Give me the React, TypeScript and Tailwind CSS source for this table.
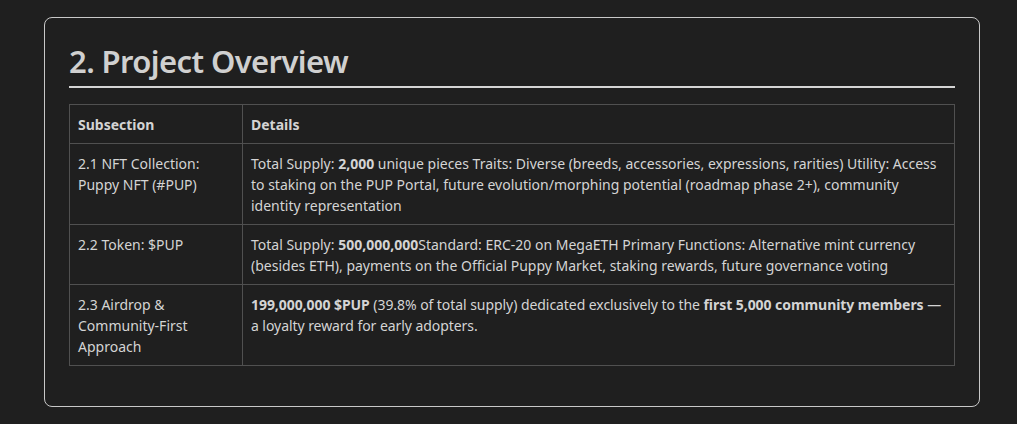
import React from "react";

type Row = { sub: string; details: React.ReactNode; tight?: boolean };

const rows: Row[] = [
  {
    sub: "2.1 NFT Collection: Puppy NFT (#PUP)",
    details: (
      <>
        Total Supply: <strong>2,000</strong> unique pieces Traits: Diverse (breeds, accessories,
        expressions, rarities) Utility: Access to staking on the PUP Portal, future
        evolution/morphing potential (roadmap phase 2+), community identity representation
      </>
    ),
  },
  {
    sub: "2.2 Token: $PUP",
    details: (
      <>
        Total Supply: <strong>500,000,000</strong>Standard: ERC-20 on MegaETH Primary Functions:
        Alternative mint currency (besides ETH), payments on the Official Puppy Market, staking
        rewards, future governance voting
      </>
    ),
  },
  {
    sub: "2.3 Airdrop & Community-First Approach",
    tight: true,
    details: (
      <>
        <strong>199,000,000 $PUP</strong> (39.8% of total supply) dedicated exclusively to the{" "}
        <strong>first 5,000 community members</strong> — a loyalty reward for early adopters.
      </>
    ),
  },
];

const App: React.FC = () => {
  return (
    <div className="min-h-[424px] bg-[#1f1f1f] pt-[17px] font-['Noto_Sans',sans-serif] text-[#d4d4d4]">
      <div className="ml-[44px] w-[936px] rounded-lg border border-[#c8c8c8] px-6 pt-6 pb-6">
        {/* HEADER */}
        <h2 className="border-b-2 border-[#d4d4d4] pb-[6px] text-[31px] font-semibold leading-[38px] tracking-[-0.6px] text-[#d0d0d0]">
          2. Project Overview
        </h2>

        {/* TABLE */}
        <table className="mt-4 mb-4 w-full border-collapse text-[14px] leading-[21px]">
          <thead>
            <tr>
              <th className="w-[173px] border border-[#505050] px-2 py-[8.5px] text-left font-bold">
                Subsection
              </th>
              <th className="border border-[#505050] px-2 py-[8.5px] text-left font-bold">
                Details
              </th>
            </tr>
          </thead>
          <tbody>
            {rows.map((r) => (
              <tr key={r.sub}>
                <td className="border border-[#505050] px-2 py-[8.5px] align-top">{r.sub}</td>
                <td
                  className={
                    r.tight
                      ? "border border-[#505050] px-2 py-[8.5px] align-top tracking-[-0.06px]"
                      : "border border-[#505050] px-2 py-[8.5px] align-top"
                  }
                >
                  {r.details}
                </td>
              </tr>
            ))}
          </tbody>
        </table>
      </div>
    </div>
  );
};

export default App;
